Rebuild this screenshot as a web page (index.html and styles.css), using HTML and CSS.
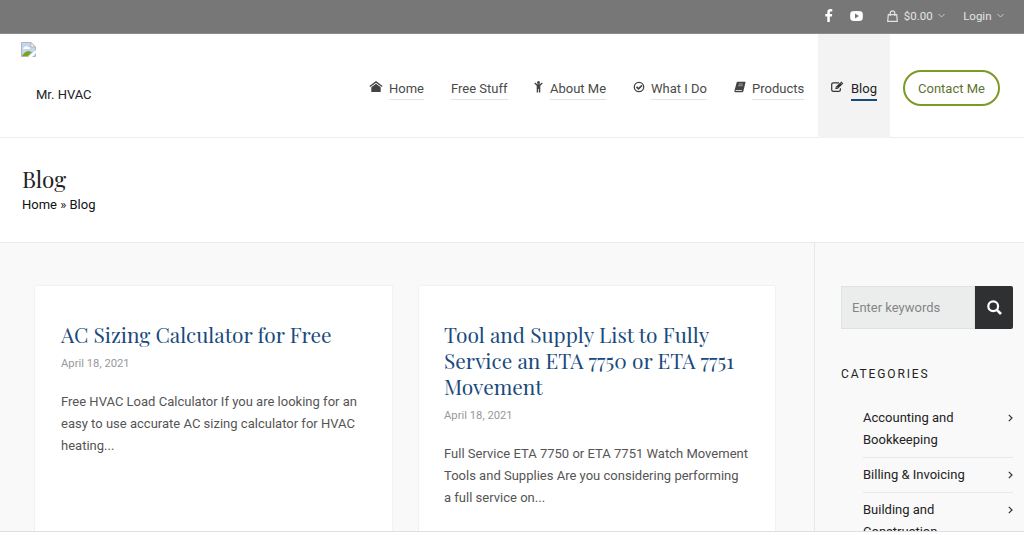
FILE: index.html
```html
<!DOCTYPE html>
<html lang="en">
<head>
<meta charset="utf-8">
<title>Blog - Mr. HVAC</title>
<link rel="stylesheet" href="styles.css">
</head>
<body>
<div class="page">
  <div class="topbar">
    <svg class="fb" width="8" height="13" viewBox="0 0 8 13"><path fill="#fff" d="M7.3.2v2.200H6C5 2.400 4.800 2.900 4.800 3.600V5h2.400l-.3 2.400H4.800V13H2.300V7.400H.3V5h2V3.200C2.300 1.200 3.500.1 5.400.1z"/></svg>
    <svg class="yt" width="13" height="10" viewBox="0 0 13 10"><path fill="#fff" fill-rule="evenodd" d="M2.500.3Q6.500-.2 10.500.3 12.300.4 12.600 2q.5 3 0 6-.3 1.600-2.100 1.700-4 .5-8 0Q.7 9.600.4 8q-.5-3 0-6Q.7.400 2.500.3zM5 2.500v5L9 5z"/></svg>
    <svg class="bag" width="11" height="12" viewBox="0 0 11 12" fill="none" stroke="#e2e2e2" stroke-width="1.200"><path d="M1.300 4.600h8.400l.6 6.700H.7zM3.200 6V3.100Q3.400.8 5.500.8T7.800 3.100V6"/></svg>
    <span class="toptext">$0.00</span>
    <svg class="down" width="7" height="5" viewBox="0 0 7 5"><path d="M.5 1l3 3 3-3" fill="none" stroke="#c8c8c8"/></svg>
    <span class="toptext login">Login</span>
    <svg class="down" width="7" height="5" viewBox="0 0 7 5"><path d="M.5 1l3 3 3-3" fill="none" stroke="#c8c8c8"/></svg>
  </div>
  <header class="header">
    <a class="logo">
      <svg width="15" height="15" viewBox="0 0 15 15"><path d="M.5.5h9.300l4.700 4.500v9.500H.5z" fill="#c5d5ee" stroke="#b3b6bb"/><path d="M9.800.5V5h4.700z" fill="#f8f8f8" stroke="#b3b6bb"/><path d="M2 7q0-2 2-2 1-2 3 0 2 0 2 2z" fill="#fff"/><path d="M1 14q2-4 6-5l4 1-4 4z" fill="#78a51f"/><path d="M7 15l8-7v3l-4 4z" fill="#fff"/></svg>
      <span class="logoname">Mr. HVAC</span>
    </a>
    <nav class="nav">
      <a class="item home"><svg width="14" height="12" viewBox="0 0 14 12"><path d="M7 0l6.600 5-.8 1L7 1.700 1.200 6l-.8-1zM7 2.700L11.700 6.200V11H2.300V6.200z" fill="#444"/></svg><span>Home</span></a>
      <a class="item free"><span>Free Stuff</span></a>
      <a class="item about"><svg width="9" height="12" viewBox="0 0 9 12"><circle cx="4.500" cy="1.600" r="1.500" fill="#444"/><path d="M.7 2l2 1.800h3.600l2-1.800" stroke="#444" stroke-width="1.300" fill="none"/><path d="M2.700 3.500h3.600v8H4.900V8h-.8v3.500H2.700z" fill="#444"/></svg><span>About Me</span></a>
      <a class="item what"><svg width="12" height="12" viewBox="0 0 12 12" fill="none" stroke="#444"><circle cx="6" cy="6" r="4.700" stroke-width="1.300"/><path d="M3.500 5.800l2 2L9 4.400" stroke-width="1.700"/></svg><span>What I Do</span></a>
      <a class="item products"><svg width="12" height="12" viewBox="0 0 12 12"><path d="M3.600.7h7.300q.9 0 .6.900L9.400 10q-.3 1.300-1.300 1.300H1.200Q0 11.200.5 9.500L2.600 1.800Q2.900.7 3.600.7z" fill="#444"/><path d="M4.700 3h4.300M4.200 4.700h4.300" fill="none" stroke="#ddd" stroke-width=".6"/><path d="M1.700 9.500h6.200" fill="none" stroke="#fff" stroke-width=".8"/></svg><span>Products</span></a>
      <a class="item blog"><svg width="13" height="12" viewBox="0 0 13 12" fill="none" stroke="#333"><path d="M8 1.800H2.500Q.7 1.800.7 3.500v5.200q0 1.700 1.800 1.700h5.200q1.700 0 1.700-1.700V7.300" stroke-width="1.200"/><path d="M4.300 8.300l.5-2.600L10.300.4l2 2-5.400 5.400z" fill="#333" stroke="none"/><path d="M5.500 6l1.100 1.100M9.400 1.500l1.800 1.800" stroke="#f3f3f3" stroke-width=".6"/></svg><span>Blog</span></a>
      <a class="contact">Contact Me</a>
    </nav>
  </header>
  <section class="titlebar">
    <h1>Blog</h1>
    <div class="crumbs">Home » Blog</div>
  </section>
  <div class="content">
    <main class="posts">
      <article class="card">
        <h2>AC Sizing Calculator for Free</h2>
        <time>April 18, 2021</time>
        <p>Free HVAC Load Calculator If you are looking for an<br>easy to use accurate AC sizing calculator for HVAC<br>heating...</p>
      </article>
      <article class="card">
        <h2>Tool and Supply List to Fully<br>Service an ETA 7750 or ETA 7751<br>Movement</h2>
        <time>April 18, 2021</time>
        <p>Full Service ETA 7750 or ETA 7751 Watch Movement<br>Tools and Supplies Are you considering performing<br>a full service on...</p>
      </article>
    </main>
    <aside class="sidebar">
      <div class="search">
        <span class="field">Enter keywords</span>
        <span class="go"><svg width="15" height="15" viewBox="0 0 15 15" fill="none" stroke="#fff"><circle cx="6.200" cy="6.200" r="4.900" stroke-width="2.200"/><path d="M9.800 9.800l4.200 4.200" stroke-width="2.600"/></svg></span>
      </div>
      <h3>CATEGORIES</h3>
      <ul class="cats">
        <li><span>Accounting and<br>Bookkeeping</span><svg width="5" height="8" viewBox="0 0 5 8"><path d="M.8.8L4 4 .8 7.200" fill="none" stroke="#333" stroke-width="1.200"/></svg></li>
        <li><span>Billing &amp; Invoicing</span><svg width="5" height="8" viewBox="0 0 5 8"><path d="M.8.8L4 4 .8 7.200" fill="none" stroke="#333" stroke-width="1.200"/></svg></li>
        <li><span>Building and<br>Construction</span><svg width="5" height="8" viewBox="0 0 5 8"><path d="M.8.8L4 4 .8 7.200" fill="none" stroke="#333" stroke-width="1.200"/></svg></li>
      </ul>
    </aside>
  </div>
</div>
</body>
</html>
```
FILE: styles.css
```css
* { box-sizing: border-box; }
body { margin: 0; background: #fff; font: 13px/22px Roboto, "Liberation Sans", sans-serif; color: #555; }
svg { display: block; flex: none; }
.page { height: 532px; overflow: hidden; display: flex; flex-direction: column; border-bottom: 1px solid #dedfe3; }
.topbar { flex: none; height: 34px; background: #777; display: flex; align-items: center; justify-content: flex-end; padding: 0 20px 2px 0; border-bottom: 1px solid #8b8b8b; }
.yt { margin-left: 17px; }
.bag { margin-left: 24px; }
.toptext { color: #e4e4e4; font-size: 11.500px; margin-left: 6px; margin-right: 5.500px; }
.login { margin-left: 18px; }
.header { flex: none; height: 104px; display: flex; justify-content: space-between; border-bottom: 1px solid #eee; }
.logo { padding: 8px 0 0 21px; color: #222; }
.logoname { display: block; margin: 27px 0 0 15px; }
.nav { display: flex; }
.item { display: flex; color: #4a4a4a; padding-top: 44px; white-space: nowrap; }
.item svg { margin: 3px 6px 0 0; }
.item span { height: 22px; border-bottom: 1px solid #e2e2e2; }
.home { width: 82px; }
.free { width: 83px; }
.about { width: 99px; }
.about svg { margin-right: 7px; }
.what { width: 101px; }
.products { width: 84px; }
.blog { width: 72px; height: 104px; background: #f3f3f3; padding-left: 13px; color: #222; }
.blog svg { margin-right: 7px; }
.blog span { border-bottom: 2px solid #194a7d; height: 23px; }
.contact { width: 97px; height: 36px; margin: 36px 24px 0 13px; border: 2px solid #7e9a24; border-radius: 18px; line-height: 33px; text-align: center; color: #5e7330; }
.titlebar { flex: none; height: 105px; padding: 28px 22px 0; border-bottom: 1px solid #eaeaea; }
h1, h2 { font-family: "Playfair Display", "Liberation Serif", serif; font-weight: 400; margin: 0; }
h1 { font-size: 22.500px; line-height: 26px; margin-bottom: 2px; color: #222; }
.crumbs { color: #111; }
.content { flex: 1; min-height: 0; background: #f9f9f9; display: flex; }
.posts { width: 814px; display: flex; gap: 27px; padding: 43px 0 0 35px; }
.card { width: 356.500px; height: 300px; background: #fff; padding: 35px 26px 0; box-shadow: 0 0 2px rgba(0,0,0,.09); white-space: nowrap; }
.card + .card { padding-left: 25.500px; }
h2 { font-size: 20.900px; line-height: 26px; color: #194a7d; }
time { display: block; margin-top: 6px; font-size: 11.250px; color: #999; }
p { margin: 16px 0 0; letter-spacing: .01px; }
.sidebar { width: 210px; border-left: 1px solid #e8e8e8; padding: 43px 11px 0 26px; }
.search { display: flex; height: 43px; }
.field { flex: 1; background: #ebeded; border: 1px solid #e0e2e2; padding: 10px; color: #858585; }
.go { width: 38px; background: #2f3032; display: flex; align-items: center; justify-content: center; border-radius: 0 2px 2px 0; }
h3 { margin: 34px 0 0; font-size: 12px; font-weight: 400; line-height: 22px; letter-spacing: 1.850px; color: #222; }
.cats { list-style: none; margin: 16px 0 0; padding: 0 0 0 22px; color: #222; }
.cats li { display: flex; justify-content: space-between; padding: 6px 0; border-bottom: 1px solid #e8e8e8; }
.cats svg { margin-top: 7px; }
```
